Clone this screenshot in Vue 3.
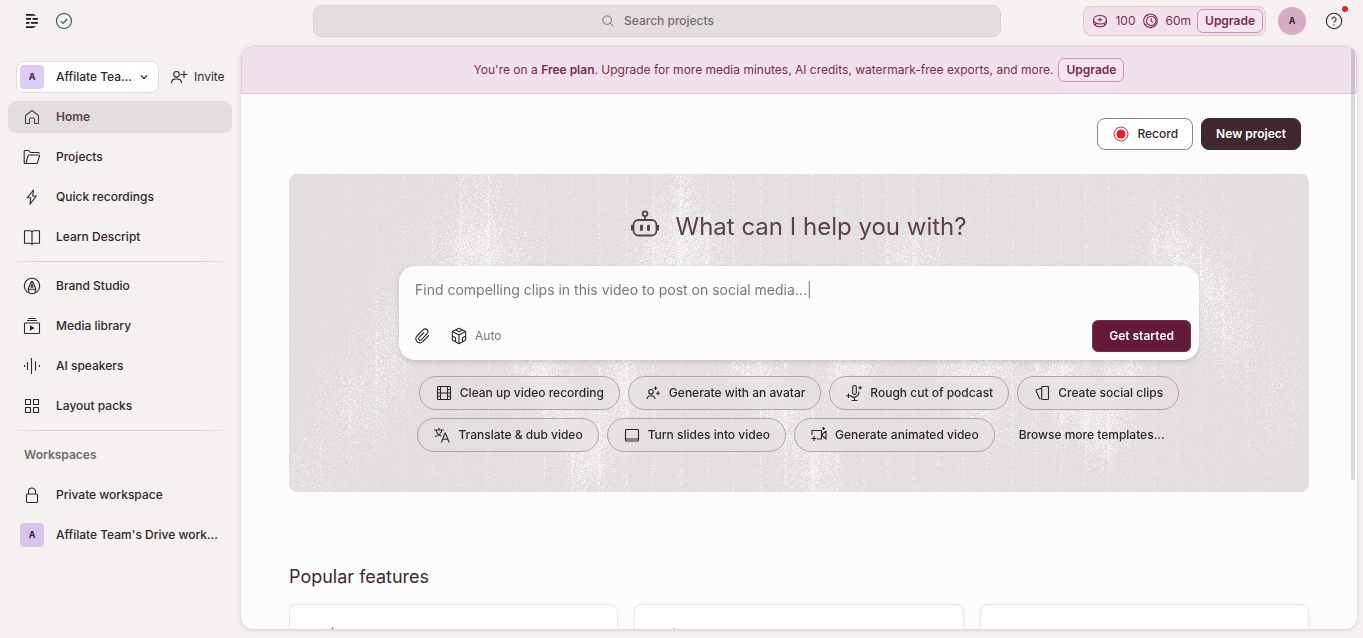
<script setup>
import { h, onMounted, ref } from 'vue'

const ICONS = {
  logo: { f: ['M3 2h6.500a6 6 0 0 1 3.500 1.700H3zM3 6h5v1.800H3zM9.500 6h5.200l.4 1.800H9.500zM3 10h3.500v1.800H3zM8 10h7.100l-.4 1.800H8zM3 14.200h10A6 6 0 0 1 9.500 16H3z'] },
  check: { d: ['M9 1.500a7.500 7.500 0 1 1 0 15 7.500 7.500 0 0 1 0-15z', 'M5.800 9.200l2.300 2.200 4.200-4.400'] },
  chevron: { d: ['M6 7.500l3 3 3-3'] },
  invite: { d: ['M6.500 3.500a2.800 2.800 0 1 1 0 5.600 2.800 2.800 0 0 1 0-5.600z', 'M1.500 15v-1a4 4 0 0 1 4-3h2a4 4 0 0 1 4 3v1', 'M14 3v7M10.500 6.500h7'] },
  home: { d: ['M2.500 15.500V7.500L9 2.500l6.500 5v8h-4V11a1 1 0 0 0-1-1h-3a1 1 0 0 0-1 1v4.500z'] },
  folder: { d: ['M3 15.500H2a.8.8 0 0 1-.8-.8V3.200a.8.800 0 0 1 .8-.7h3.600l1.800 2h8a1 1 0 0 1 1 1', 'M3 15.500h10.500a1 1 0 0 0 1-.8l2-6.900a.7.700 0 0 0-.7-.8H6a1 1 0 0 0-1 .7z'] },
  bolt: { d: ['M10.500 2L4.500 9.700h3.200L7 16.200 13.300 8h-3.600z'] },
  book: { d: ['M9 4.500v12', 'M1.500 2.800H7a2 2 0 0 1 2 1.700 2 2 0 0 1 2-1.700h5.500v12.400H11a2 2 0 0 0-2 1.300 2 2 0 0 0-2-1.300H1.500z'] },
  brand: { d: ['M9 1.300a7.700 7.700 0 1 1 0 15.400A7.700 7.700 0 0 1 9 1.300z', 'M5 12.300L8.300 4.600h1.400L13 12.300z', 'M9 4.600v3.600M5.800 12.300v3.500M12.200 12.300v3.500', 'M9 8.200a1.100 1.100 0 1 1 0 2.200 1.100 1.100 0 0 1 0-2.200z'] },
  media: { d: ['M2.300 6h13.400a.8.800 0 0 1 .8.800v8.900a.8.800 0 0 1-.8.800H2.300a.8.800 0 0 1-.8-.8V6.800a.8.800 0 0 1 .8-.8z', 'M4 3.500h10M5 1.500h8'], f: ['M7 8.200l4.600 2.800L7 13.800z'] },
  speakers: { d: ['M1.500 8v2M4.500 5v8M8.500 1v16M12.500 4.500v9M16.500 8v2'] },
  grid: { d: ['M2.500 2.500h5v5h-5zM10.500 2.500h5v5h-5zM2.500 10.500h5v5h-5zM10.500 10.500h5v5h-5z'] },
  lock: { d: ['M4.500 8h9a1 1 0 0 1 1 1v6.500a1 1 0 0 1-1 1h-9a1 1 0 0 1-1-1V9a1 1 0 0 1 1-1z', 'M5.500 8V5.500a3.500 3.500 0 0 1 7 0V8'] },
  search: { d: ['M8 3.200a4.800 4.800 0 1 1 0 9.600 4.800 4.800 0 0 1 0-9.600z', 'M11.600 11.600l3.400 3.400'] },
  coin: { d: ['M9 3.500c3.800 0 6.500 1.800 6.500 4.200S12.800 12 9 12s-6.500-1.900-6.500-4.300S5.200 3.500 9 3.500z', 'M2.500 8v2.500c0 2.300 2.800 4.200 6.500 4.200s6.500-1.900 6.500-4.200V8', 'M9 5.800v3.800M6.500 7.700h5M4.500 11.500v1.600M13.500 11.500v1.600'] },
  clock: { d: ['M8.500 2a6.800 6.800 0 1 1 0 13.600 6.800 6.800 0 0 1 0-13.600z', 'M9.200 4.200a4.700 4.700 0 1 1 0 9.400 4.700 4.700 0 0 1 0-9.400z', 'M9.200 6.200v3l1.800 1M5 3l1 1M3 13l1.500-1'] },
  help: { d: ['M9 1.300a7.700 7.700 0 1 1 0 15.400A7.700 7.700 0 0 1 9 1.300z', 'M6.900 7.200a2.100 2.100 0 1 1 3.200 1.800c-.7.400-1.100.8-1.100 1.600M9 12.300v1.100'] },
  clip: { d: ['M15.800 8.300l-6 6.200a4 4 0 0 1-5.800.2 4 4 0 0 1 0-5.700l6.200-6.300a2.800 2.800 0 0 1 4 0 2.800 2.800 0 0 1 0 4l-6 6.100a1.500 1.500 0 0 1-2.200 0 1.500 1.500 0 0 1 0-2.200l5-5.100'] },
  cube: { d: ['M9 1.300l6.700 3.300v8.500L9 16.700l-6.700-3.600V4.600z', 'M2.300 4.600L9 8l6.700-3.400M9 8v8.700M5.700 3L9 4.700 12.300 3', 'M2.300 9l3.200 1.700v4M15.700 9l-3.200 1.700v4'] },
  film: { d: ['M3.300 2.500h11.400a.8.800 0 0 1 .8.800v11.400a.8.800 0 0 1-.8.800H3.300a.8.800 0 0 1-.8-.8V3.300a.8.800 0 0 1 .8-.8z', 'M5.500 2.500v13M12.500 2.500v13M5.500 9h7M2.500 5.700h3M2.500 9h3M2.500 12.300h3M12.500 5.700h3M12.500 9h3M12.500 12.300h3'] },
  avatar: { d: ['M7 5.500a2.300 2.300 0 1 1 0 4.600 2.300 2.300 0 0 1 0-4.600z', 'M3 15c.2-2 1.700-3.200 4-3.200s3.800 1.200 4 3.200', 'M11.500 2.500v3.400M9.800 4.200h3.400M14 7.200v4M12 9.200h4'] },
  mic: { d: ['M9.500 1.500a1.800 1.800 0 0 1 1.800 1.800v5.400a1.800 1.800 0 0 1-3.600 0V3.300a1.800 1.800 0 0 1 1.800-1.800z', 'M5.800 12c2.700 2.600 8 1.200 8.200-4.500M9.500 13.500v3M6.500 16.500h6M3.500 9.500v4.600M1.200 11.800h4.600M15.200 2v3.600M13.400 3.800H17'] },
  cards: { d: ['M9.500 2.500h5.200a.8.800 0 0 1 .8.800v11.400a.8.800 0 0 1-.8.800H9.500a.8.800 0 0 1-.8-.8V3.300a.8.800 0 0 1 .8-.8z', 'M8 4.500l-4.300 1.200a1 1 0 0 0-.6 1.300l3.200 7a1 1 0 0 0 1.300.6'] },
  translate: { d: ['M1.200 4h9.600M6 2v2M3 4c.5 3 2.800 5.300 5.500 6M9 4c-.6 3-3.400 5.600-7 6.500', 'M8.300 16.500l3.900-9.700 4 9.700M9.600 13.300h5.200'] },
  slides: { d: ['M3.300 3.500h11.400a.8.800 0 0 1 .8.800v8.700h-13V4.300a.8.800 0 0 1 .8-.8z', 'M2.500 13v1.200a.8.800 0 0 0 .8.800h11.400a.8.800 0 0 0 .8-.8V13'] },
  camera: { d: ['M2 9V4.500h9.500v8.500H7', 'M11.500 9L16 5v8z', 'M4 10v5M1.500 12.500h5M13.500 1v3M12 2.500h3'] },
}

const Icon = ({ name }) => {
  const icon = ICONS[name]
  return h('svg', { class: 'icon', viewBox: '0 0 18 18', 'aria-hidden': 'true' }, [
    ...(icon.d || []).map((d) => h('path', { d, fill: 'none', stroke: 'currentColor', 'stroke-width': 1.1, 'stroke-linejoin': 'round' })),
    ...(icon.f || []).map((d) => h('path', { d, fill: 'currentColor' })),
  ])
}
Icon.props = ['name']

const mainNav = [
  { icon: 'home', label: 'Home', active: true },
  { icon: 'folder', label: 'Projects' },
  { icon: 'bolt', label: 'Quick recordings' },
  { icon: 'book', label: 'Learn Descript' },
]
const toolNav = [
  { icon: 'brand', label: 'Brand Studio' },
  { icon: 'media', label: 'Media library' },
  { icon: 'speakers', label: 'AI speakers' },
  { icon: 'grid', label: 'Layout packs' },
]
const chips = [
  { icon: 'film', label: 'Clean up video recording' },
  { icon: 'avatar', label: 'Generate with an avatar' },
  { icon: 'mic', label: 'Rough cut of podcast' },
  { icon: 'cards', label: 'Create social clips' },
  { icon: 'translate', label: 'Translate & dub video' },
  { icon: 'slides', label: 'Turn slides into video' },
  { icon: 'camera', label: 'Generate animated video' },
]

const grain = ref(null)

// Vertical streaks: x positions on a 1020 x 318 field.
const STREAKS = [4, 31, 60, 87, 115, 143, 171, 199, 227, 255, 283, 310, 337, 364, 391, 418, 444, 471, 496, 523, 548, 574, 598, 624, 649, 674, 698, 723, 747, 772, 796, 819, 842, 865, 888, 911, 934, 958, 981, 1004]
// Soft clouds of grain: centre x, centre y, spread x, spread y, strength.
const CLOUDS = [
  [190, 10, 20, 60, 0.35], [190, 82, 38, 34, 0.65], [395, 0, 14, 60, 0.5], [388, 80, 36, 38, 0.7],
  [620, 82, 24, 24, 0.6], [880, 75, 22, 30, 0.6], [915, 115, 22, 36, 0.6], [945, 160, 20, 34, 0.45],
  [990, 220, 24, 40, 0.18], [100, 175, 18, 44, 0.5], [65, 230, 26, 34, 0.42], [20, 300, 28, 32, 0.22],
  [250, 200, 22, 20, 0.75], [264, 235, 17, 24, 0.45], [335, 205, 20, 32, 0.75], [300, 255, 32, 28, 0.45],
  [300, 295, 20, 30, 0.55], [465, 200, 22, 20, 0.7], [490, 240, 20, 26, 0.6], [560, 200, 22, 26, 0.7],
  [525, 290, 22, 34, 0.65], [685, 200, 34, 20, 0.7], [695, 240, 24, 28, 0.4], [770, 200, 22, 20, 0.7],
  [838, 200, 20, 20, 0.6], [800, 240, 32, 24, 0.65], [815, 270, 16, 20, 0.45],
]

onMounted(() => {
  const canvas = grain.value
  const w = canvas.clientWidth
  const ht = canvas.clientHeight
  canvas.width = w
  canvas.height = ht
  const ctx = canvas.getContext('2d')
  const image = ctx.createImageData(w, ht)
  let seed = 4711
  const rand = () => {
    seed = (Math.imul(seed, 1664525) + 1013904223) >>> 0
    return seed / 4294967296
  }
  for (let y = 0; y < ht; y++) {
    for (let x = 0; x < w; x++) {
      const u = (x * 1020) / w
      const v = (y * 318) / ht
      let cloud = 0
      for (const [cx, cy, sx, sy, a] of CLOUDS) {
        const dx = (u - cx) / sx
        const dy = (v - cy) / sy
        const q = dx * dx + dy * dy
        if (q < 8) cloud += a * Math.exp(-q / 1.4)
      }
      let streak = 0
      for (const s of STREAKS) {
        const d = Math.abs(u - s)
        if (d < 14) streak = Math.max(streak, Math.exp(-d), 0.22 * Math.exp(-d / 5))
      }
      const fade = Math.min(1, 0.2 + u / 500, 0.15 + (1020 - u) / 300)
      const density = Math.min(0.95, cloud * (0.9 + streak * 0.6) + streak * 0.4 * fade)
      const i = (y * w + x) * 4
      image.data[i] = image.data[i + 1] = image.data[i + 2] = 253
      // Faint grain everywhere, brighter and denser where the field is strong.
      const faint = rand() * 26 * fade
      image.data[i + 3] = rand() < density ? 60 + rand() * (80 + 115 * density) : faint
    }
  }
  ctx.putImageData(image, 0, 0)
})
</script>

<template>
  <div class="app">
    <header class="topbar">
      <div class="brand">
        <Icon name="logo" />
        <Icon name="check" class="ok" />
      </div>
      <button class="search"><Icon name="search" />Search projects</button>
      <div class="account">
        <div class="credits">
          <Icon name="coin" /><span>100</span>
          <Icon name="clock" /><span>60m</span>
          <button class="upgrade">Upgrade</button>
        </div>
        <button class="avatar">A</button>
        <button class="help" aria-label="Help"><Icon name="help" /><i class="dot"></i></button>
      </div>
    </header>

    <div class="body">
      <aside class="sidebar">
        <div class="team">
          <button class="switcher">
            <span class="tile">A</span><span class="name">Affilate Tea...</span><Icon name="chevron" />
          </button>
          <button class="invite"><Icon name="invite" />Invite</button>
        </div>
        <nav>
          <a v-for="n in mainNav" :key="n.label" href="#" class="item" :class="{ active: n.active }">
            <Icon :name="n.icon" />{{ n.label }}
          </a>
        </nav>
        <hr />
        <nav>
          <a v-for="n in toolNav" :key="n.label" href="#" class="item"><Icon :name="n.icon" />{{ n.label }}</a>
        </nav>
        <hr />
        <h2 class="group">Workspaces</h2>
        <nav>
          <a href="#" class="item"><Icon name="lock" />Private workspace</a>
          <a href="#" class="item drive"><span class="tile">A</span>Affilate Team's Drive work...</a>
        </nav>
      </aside>

      <main class="panel">
        <div class="banner">
          <span>You're on a <b>Free plan</b>. Upgrade for more media minutes, AI credits, watermark-free exports, and more.</span>
          <button class="upgrade">Upgrade</button>
        </div>
        <div class="actions">
          <button class="record">
            <svg class="icon" viewBox="0 0 18 18" aria-hidden="true">
              <circle cx="9" cy="9" r="7" fill="none" stroke="#e5222b" />
              <circle cx="9" cy="9" r="4.500" fill="#e5222b" />
            </svg>
            Record
          </button>
          <button class="new">New project</button>
        </div>

        <section class="hero">
          <canvas ref="grain" class="grain"></canvas>
          <h1>
            <svg class="robot" viewBox="0 0 28 28" fill="none" stroke="currentColor" stroke-width="1.800" aria-hidden="true">
              <circle cx="14" cy="3.800" r="2.400" />
              <path d="M14 6v4" />
              <rect x="2.500" y="10" width="23" height="15.500" rx="5" />
              <path d="M1.200 15v5.500M26.800 15v5.500" stroke-width="2.400" />
              <path d="M10.500 16v3.500M17.500 16v3.500" stroke-width="3" stroke-linecap="round" />
            </svg>
            What can I help you with?
          </h1>
          <form class="prompt" @submit.prevent>
            <input type="text" aria-label="Prompt" placeholder="Find compelling clips in this video to post on social media...|" />
            <div class="tools">
              <button type="button" class="plain" aria-label="Attach file"><Icon name="clip" /></button>
              <button type="button" class="plain auto"><Icon name="cube" />Auto</button>
              <button type="submit" class="start">Get started</button>
            </div>
          </form>
          <div class="chips">
            <button v-for="c in chips" :key="c.label" class="chip"><Icon :name="c.icon" />{{ c.label }}</button>
            <a href="#" class="browse">Browse more templates...</a>
          </div>
        </section>

        <section class="features">
          <h2>Popular features</h2>
          <div class="cards">
            <article class="card"><i class="spark"></i></article>
            <article class="card"><i class="spark pale"></i></article>
            <article class="card"></article>
          </div>
        </section>
        <div class="scroll"></div>
      </main>
    </div>
  </div>
</template>

<style>
body {
  margin: 0;
  background: #f5f1f0;
}
</style>

<style scoped>
* {
  box-sizing: border-box;
}
.app {
  display: flex;
  flex-direction: column;
  height: 100vh;
  overflow: hidden;
  background: #f5f1f0;
  color: #33242a;
  font: 500 12px/16px Inter, "Liberation Sans", sans-serif;
}
button {
  font: inherit;
  color: inherit;
  margin: 0;
  padding: 0;
  border: 0;
  background: none;
  white-space: nowrap;
}
a {
  color: inherit;
  text-decoration: none;
}
h1,
h2 {
  margin: 0;
}
.icon {
  width: 18px;
  height: 18px;
  flex: none;
}
.topbar {
  display: flex;
  flex: none;
  height: 46px;
  padding: 5px 20px 9px 23px;
  align-items: center;
}
.brand {
  display: flex;
  width: 290px;
  gap: 14px;
  color: #21151a;
}
.ok {
  color: #275d49;
}
.search {
  display: flex;
  flex: 0 1 688px;
  height: 32px;
  align-items: center;
  justify-content: center;
  gap: 8px;
  border: 1px solid #d9d2d5;
  border-radius: 8px;
  background: #e3dddf;
  color: #7e686f;
}
.search .icon {
  width: 16px;
  height: 16px;
}
.account {
  display: flex;
  margin-left: auto;
  align-items: center;
}
.credits {
  display: flex;
  height: 30px;
  align-items: center;
  padding: 0 2px 0 7px;
  gap: 6px;
  border: 1px solid #e5c5d8;
  border-radius: 8px;
  background: #f1e1ea;
  color: #7a2c51;
  font-weight: 400;
}
.upgrade {
  height: 24px;
  padding: 0 7px;
  border: 1px solid #d490b8;
  border-radius: 6px;
  background: #f3e4ed;
  color: #7a2c51;
  font-weight: 600;
}
.avatar {
  width: 28px;
  height: 28px;
  margin: 0 19px 0 12px;
  border-radius: 50%;
  background: #d6adc4;
  font-size: 9px;
  font-weight: 700;
}
.help {
  position: relative;
  width: 18px;
  height: 18px;
}
.dot {
  position: absolute;
  top: -6px;
  right: -5px;
  width: 6px;
  height: 6px;
  border-radius: 50%;
  background: #e5222b;
}
.body {
  display: flex;
  flex: 1;
  min-height: 0;
  padding: 0 6px 9px 0;
}
.sidebar {
  flex: 0 0 241px;
  padding: 15px 9px 0 8px;
}
.team {
  display: flex;
  align-items: center;
  margin: 0 0 8px 8px;
  gap: 11px;
}
.switcher {
  display: flex;
  width: 143px;
  height: 32px;
  align-items: center;
  padding: 0 5px 0 3px;
  border: 1px solid #e2dcde;
  border-radius: 8px;
  background: #fff;
}
.tile {
  display: grid;
  width: 24px;
  height: 24px;
  flex: none;
  place-items: center;
  border-radius: 4px;
  background: #dfccf6;
  font-size: 9px;
  font-weight: 700;
}
.name {
  flex: 1;
  padding-left: 12px;
  text-align: left;
}
.invite {
  display: flex;
  align-items: center;
  gap: 6px;
  font-weight: 400;
}
nav {
  display: grid;
  gap: 8px;
}
.item {
  display: flex;
  height: 32px;
  align-items: center;
  gap: 15px;
  padding-left: 15px;
  border-radius: 8px;
  white-space: nowrap;
}
.active {
  background: #e3dddf;
  color: #5c414b;
  font-weight: 600;
}
.drive {
  gap: 12px;
  padding-left: 12px;
}
.drive .tile {
  background: #d9c4ec;
}
hr {
  height: 1px;
  margin: 8px 0;
  border: 0;
  background: linear-gradient(90deg, transparent, #d5cfd0 15%, #d5cfd0 85%, transparent);
}
.group {
  padding: 8px 16px 16px;
  color: #76676c;
  font: inherit;
  font-weight: 600;
}
.panel {
  position: relative;
  flex: 1;
  min-width: 0;
  overflow: hidden;
  border-radius: 12px;
  background: #fcfcfc;
  box-shadow: 0 1px 4px #5036402e;
}
.banner {
  display: flex;
  height: 48px;
  align-items: center;
  justify-content: center;
  gap: 5px;
  border: 1px solid #e6cbdb;
  border-radius: 12px 12px 0 0;
  background: #f1e1ea;
  color: #7a2c51;
}
.banner span {
  font-weight: 400;
}
.banner b {
  font-weight: 600;
}
.actions {
  display: flex;
  justify-content: flex-end;
  gap: 8px;
  padding: 24px 56px;
}
.record,
.new {
  display: flex;
  height: 32px;
  align-items: center;
  gap: 7px;
  padding: 0 14px;
  border: 1px solid #8b8688;
  border-radius: 8px;
  background: #fff;
}
.new {
  border-color: #3f2830;
  background: #3f2830;
  color: #fff;
  font-weight: 600;
}
.hero {
  position: relative;
  display: flex;
  flex-direction: column;
  align-items: center;
  margin: 0 48px 72px;
  padding: 32px 16px 40px;
  overflow: hidden;
  border-radius: 8px;
  background: #e3dddf;
}
.grain {
  position: absolute;
  inset: 0;
  width: 100%;
  height: 100%;
}
h1 {
  position: relative;
  display: flex;
  align-items: center;
  gap: 16px;
  margin-bottom: 18px;
  color: #5c414b;
  font-size: 24px;
  font-weight: 400;
  line-height: 42px;
}
.robot {
  width: 28px;
  height: 28px;
  margin-bottom: 6px;
}
.prompt {
  position: relative;
  width: 100%;
  max-width: 800px;
  padding: 12px 8px 8px 16px;
  border-radius: 16px;
  background: #fcfcfc;
  box-shadow: 0 2px 5px #50364033;
}
.prompt input {
  display: block;
  width: 100%;
  height: 24px;
  margin-bottom: 18px;
  padding: 0;
  border: 0;
  outline: 0;
  background: none;
  font: 400 14px/24px Inter, "Liberation Sans", sans-serif;
}
.prompt input::placeholder {
  color: #807679;
  opacity: 1;
}
.tools {
  display: flex;
  align-items: center;
  gap: 21px;
}
.plain {
  display: flex;
  align-items: center;
  margin-left: -2px;
  gap: 7px;
}
.auto {
  color: #807679;
  font-weight: 400;
}
.auto .icon {
  color: #33242a;
}
.start {
  height: 32px;
  margin-left: auto;
  padding: 0 16px;
  border: 1px solid #7b2f50;
  border-radius: 6px;
  background: #641a38;
  color: #fff;
  font-weight: 600;
}
.chips {
  position: relative;
  display: flex;
  flex-wrap: wrap;
  justify-content: center;
  max-width: 800px;
  gap: 8px;
  margin-top: 16px;
}
.chip {
  display: flex;
  height: 34px;
  align-items: center;
  gap: 7px;
  padding: 0 15px;
  border: 1px solid #b79fa8;
  border-radius: 17px;
  background: #e3dddf80;
  backdrop-filter: blur(4px);
}
.browse {
  padding: 9px 16px;
}
.features {
  padding: 0 48px;
}
.features h2 {
  margin-bottom: 15px;
  color: #3f2830;
  font-size: 18px;
  font-weight: 400;
  line-height: 25px;
}
.cards {
  display: grid;
  grid-template-columns: repeat(3, 1fr);
  gap: 16px;
}
.card {
  height: 160px;
  padding: 22px 40px;
  border: 1px solid #ebe9ea;
  border-radius: 8px;
  background: #fff;
  box-shadow: 0 0 4px #5036400d;
}
.spark {
  display: block;
  width: 5px;
  height: 4px;
  background: #c9512b;
  clip-path: polygon(50% 0, 100% 100%, 0 100%);
}
.pale {
  margin-left: -4px;
  background: #f3bcb4;
}
.scroll {
  position: absolute;
  top: 2px;
  right: 2px;
  width: 4px;
  height: 432px;
  border-radius: 2px;
  background: #5c414b33;
}
</style>
